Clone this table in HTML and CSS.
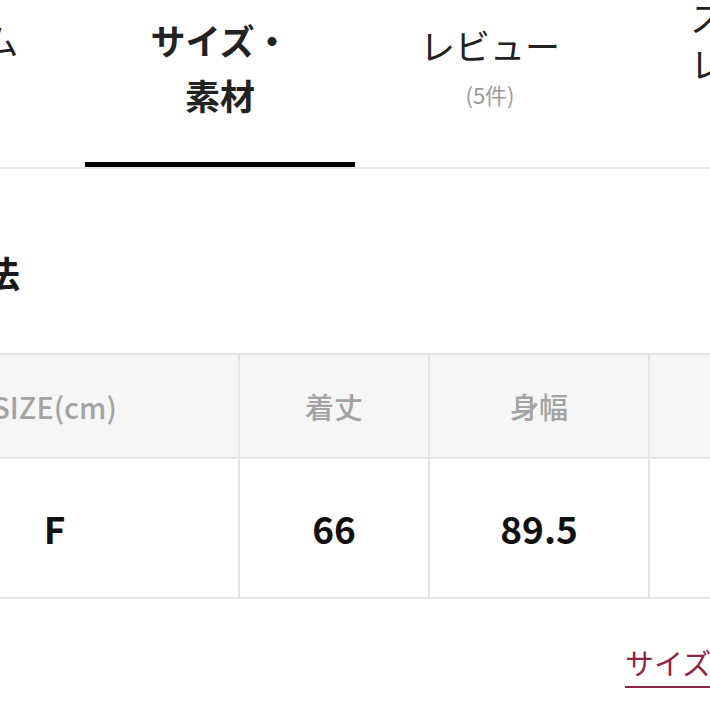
FILE: index.html
```html
<!DOCTYPE html>
<html lang="ja">
<head>
<meta charset="utf-8">
<link rel="stylesheet" href="styles.css">
</head>
<body>
<div class="page">
  <nav class="tabs">
    <div class="tab"><span class="tab-line">アイテム</span><span class="tab-line">説明</span></div>
    <div class="tab tab-active"><span class="tab-line">サイズ・</span><span class="tab-line">素材</span></div>
    <div class="tab tab-review"><span class="tab-line">レビュー</span><span class="count">(5件)</span></div>
    <div class="tab tab-staff"><span class="tab-line">スタッフ</span><span class="tab-line">レビュー</span><span class="count">(3件)</span></div>
  </nav>

  <h2 class="section-title">採寸方法</h2>

  <table class="size-table">
    <thead>
      <tr>
        <th class="c1">SIZE(cm)</th>
        <th class="c2">着丈</th>
        <th class="c3">身幅</th>
        <th class="c4">袖丈</th>
        <th class="c5">肩幅</th>
      </tr>
    </thead>
    <tbody>
      <tr>
        <td>F</td>
        <td>66</td>
        <td>89.5</td>
        <td>54</td>
        <td>48</td>
      </tr>
    </tbody>
  </table>

  <div class="link-row"><a class="guide-link" href="#">サイズの測り方</a></div>
</div>
</body>
</html>
```

FILE: styles.css
```css
html, body {
  margin: 0;
  padding: 0;
  background: #ffffff;
}

body {
  width: 710px;
  height: 710px;
  overflow: hidden;
  font-family: "Noto Sans CJK JP", "Noto Sans", sans-serif;
  color: #222222;
}

.page {
  width: 710px;
}

.tabs {
  display: flex;
  margin-left: -185px;
  width: 1080px;
  border-bottom: 2px solid #e6e6e6;
}

.tab {
  flex: 0 0 270px;
  height: 167px;
  box-sizing: border-box;
  padding-bottom: 33px;
  display: flex;
  flex-direction: column;
  align-items: center;
  justify-content: center;
  font-size: 35px;
  font-weight: 400;
  color: #222222;
}

.tab-active {
  border-bottom: 5px solid #000000;
  padding-bottom: 28px;
  font-weight: 700;
}

.tab-line {
  display: block;
  line-height: 55px;
  white-space: nowrap;
}

.tab-review {
  padding-bottom: 41px;
}

.tab-staff {
  padding-bottom: 50px;
}

.tab-staff .tab-line {
  line-height: 46px;
}

.count {
  display: block;
  margin-top: 7px;
  font-size: 22px;
  line-height: 30px;
  color: #9a9a9a;
}

.section-title {
  margin: 78px 0 0 -124px;
  font-size: 36px;
  line-height: 50px;
  font-weight: 700;
  color: #1a1a1a;
  white-space: nowrap;
}

.size-table {
  margin: 56px 0 0 -131px;
  border-collapse: collapse;
  table-layout: fixed;
  width: 1210px;
}

.size-table th,
.size-table td {
  border: 2px solid #e4e4e4;
  text-align: center;
  padding: 0;
}

.size-table th {
  height: 102px;
  background: #f6f6f6;
  color: #a3a3a3;
  font-size: 29px;
  font-weight: 500;
}

.size-table td {
  height: 138px;
  background: #ffffff;
  color: #111111;
  font-size: 37px;
  font-weight: 600;
}

.c1 { width: 367px; }
.c2 { width: 188px; }
.c3 { width: 218px; }
.c4 { width: 218px; }
.c5 { width: 219px; }

.link-row {
  margin-top: 44px;
  padding-left: 625px;
  white-space: nowrap;
}

.guide-link {
  display: inline-block;
  font-size: 29px;
  line-height: 38px;
  padding-bottom: 5px;
  color: #8c2846;
  text-decoration: none;
  border-bottom: 2px solid #8c2846;
}
```
